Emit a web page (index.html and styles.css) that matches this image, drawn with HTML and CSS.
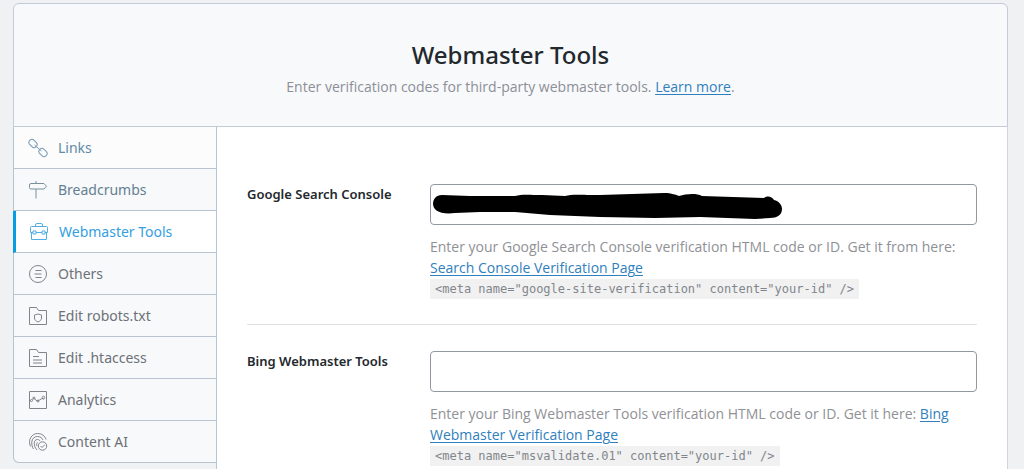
FILE: index.html
```html
<!DOCTYPE html>
<html lang="en">
<head>
<meta charset="utf-8">
<title>Webmaster Tools</title>
<link rel="stylesheet" href="styles.css">
</head>
<body>
<main class="settings">
  <header class="header">
    <h1 class="title">Webmaster Tools</h1>
    <p class="subtitle">Enter verification codes for third-party webmaster tools. <a class="link" href="#">Learn more</a>.</p>
  </header>
  <div class="body">
    <nav class="tabs">
      <a class="tab tab-links" href="#"><svg class="icon" viewBox="0 0 20 20"><rect x="0.5" y="2.500" width="9" height="6" rx="3" transform="rotate(45 5 5.500)"/><rect x="10.500" y="11.500" width="9" height="6" rx="3" transform="rotate(45 15 14.500)"/><path d="M6.500 7l7 6"/></svg>Links</a>
      <a class="tab tab-crumbs" href="#"><svg class="icon" viewBox="0 0 20 20"><path d="M8 1v2.500M8 9v9.500M3 3.500h13l2.500 2.700L16 9H3a1.500 1.500 0 0 1-1.500-1.500V5A1.500 1.500 0 0 1 3 3.500z"/></svg>Breadcrumbs</a>
      <a class="tab active" href="#" aria-current="page"><svg class="icon" viewBox="0 0 20 20"><path d="M6.500 4.500V3a1.500 1.500 0 0 1 1.500-1.500h4A1.500 1.500 0 0 1 13.500 3v1.500M2.500 4.500h15a1 1 0 0 1 1 1v5h-2.500M13 10.500H7M4 10.500H1.500v-5a1 1 0 0 1 1-1M2.500 10.500v7h15v-7M4 9h3v3H4zM13 9h3v3h-3z"/></svg>Webmaster Tools</a>
      <a class="tab" href="#"><svg class="icon" viewBox="0 0 20 20"><circle cx="10" cy="10" r="8.500"/><path d="M7.500 6.500h6M6.500 10h7M7.500 13.500h6"/></svg>Others</a>
      <a class="tab" href="#"><svg class="icon" viewBox="0 0 20 20"><path d="M1.500 18.500v-17h7l2 3h8v14zM10 8l3.500 1v3c0 2-1.500 3.200-3.500 4-2-.8-3.500-2-3.500-4V9z"/></svg>Edit robots.txt</a>
      <a class="tab" href="#"><svg class="icon" viewBox="0 0 20 20"><path d="M1.500 18.500v-17h7l2 3h8v14zM5 8.500h6M5 12h9M5 15h9"/></svg>Edit .htaccess</a>
      <a class="tab" href="#"><svg class="icon" viewBox="0 0 20 20"><path d="M1.500 1.500h17v17h-17zM1.500 11.500L3 10.500M4.500 9.500l1-1.500L9 11l2.500-1L14 8.500l2 .5"/><circle cx="3.500" cy="10.500" r="1"/><circle cx="6" cy="8" r="1"/><circle cx="10" cy="11" r="1"/><circle cx="15.500" cy="7.500" r="1.300"/></svg>Analytics</a>
      <a class="tab" href="#"><svg class="icon" viewBox="0 0 20 20"><circle cx="14.500" cy="14" r="4.200"/><path d="M12.500 14l1.500 1.500 2.800-2.800M2.500 14.500C-.5 7.500 4 1.500 9.500 1.500c4.500 0 7.500 2.500 8.500 6M5.500 17c-3-4.500-2.500-12.500 4-12.500 3 0 4.500 1.500 5.500 3.500M9 18c-3.500-3.500-4-10.500.5-10.500 1 0 2 .5 2.500 1.500M9 14c-.5-1.500-.5-3.500.5-3.500"/></svg>Content AI</a>
    </nav>
    <section class="content">
      <div class="row">
        <label class="label" for="google">Google Search Console</label>
        <div class="field">
          <div class="input-wrap">
            <input class="input" id="google" type="text">
            <svg class="redaction" viewBox="0 0 360 32" aria-hidden="true"><path d="M3 14C3 9 6 5 12 5L40 6L85 6C92 4 100 5 112 5L135 6C142 4 150 5 170 5L234 3C242 3 246 5 249 6C256 4 266 3 272 6L334 8C338 5 342 7 344 10C349 11 352 15 352 19C352 25 347 28 340 28L325 29L270 27L225 28L170 27L120 25L85 22L50 22L25 23C10 25 3 20 3 14Z"/></svg>
          </div>
          <p class="help">Enter your Google Search Console verification HTML code or ID. Get it from here: <a class="link" href="#">Search Console Verification Page</a></p>
          <code class="code">&lt;meta name="google-site-verification" content="your-id" /&gt;</code>
        </div>
      </div>
      <div class="row">
        <label class="label" for="bing">Bing Webmaster Tools</label>
        <div class="field">
          <div class="input-wrap"><input class="input" id="bing" type="text"></div>
          <p class="help">Enter your Bing Webmaster Tools verification HTML code or ID. Get it here: <a class="link" href="#">Bing Webmaster Verification Page</a></p>
          <code class="code">&lt;meta name="msvalidate.01" content="your-id" /&gt;</code>
        </div>
      </div>
    </section>
  </div>
</main>
</body>
</html>
```
FILE: styles.css
```css
* { box-sizing: border-box; }
body {
  margin: 0;
  background: #f0f1f3;
  color: #23282d;
  font-family: "Noto Sans", "Open Sans", sans-serif;
  font-size: 14px;
}
.settings {
  display: flex;
  flex-direction: column;
  min-height: 100vh;
  padding: 3px 16px 0 13px;
}
.header {
  padding: 34px 0 28px;
  border: 1px solid #c3cad8;
  border-radius: 6px 6px 0 0;
  background: #f8f9fb;
  text-align: center;
}
.title {
  margin: 0;
  font-size: 24px;
  font-weight: 500;
  line-height: 34px;
}
.subtitle {
  margin: 4px 0 0;
  color: #8c8f98;
  font-family: "Open Sans", "Noto Sans", sans-serif;
  font-size: 14px;
  line-height: 22px;
}
.link { color: #2f80bd; text-decoration: underline; text-underline-offset: 2px; }
.body { display: flex; flex: 1; }
.tabs { flex: 0 0 203px; }
.tab {
  display: flex;
  align-items: center;
  gap: 10px;
  height: 42px;
  padding-left: 14px;
  border-left: 1px solid #b5c2cf;
  border-bottom: 1px solid #b9c4d1;
  background: #f8f9fb;
  color: #6d7177;
  font-family: "Noto Sans", "Open Sans", sans-serif;
  font-size: 14px;
  text-decoration: none;
}
.tab:last-child { border-bottom-left-radius: 6px; }
.tab-links { background: #fcfcfc; color: #5f8ba6; }
.tab-crumbs { color: #64808f; }
.active {
  padding-left: 13px;
  border-left: 3px solid #069de3;
  background: #fff;
  color: #35a0df;
}
.icon {
  flex: none;
  width: 20px;
  height: 20px;
  fill: none;
  stroke: currentColor;
  stroke-width: 1;
  opacity: 0.85;
}
.content {
  flex: 1;
  min-width: 0;
  padding: 31px 30px 0;
  border-left: 1px solid #b9c4d1;
  border-right: 1px solid #cfd4df;
  background: #fff;
}
.row { display: flex; padding: 26px 0 25px; }
.row + .row { padding-bottom: 0; border-top: 1px solid #e0e1e3; }
.label {
  flex: 0 0 183px;
  font-size: 13px;
  font-weight: 600;
  line-height: 20px;
}
.field { flex: 1; min-width: 0; }
.input-wrap { position: relative; }
.input {
  display: block;
  width: 100%;
  height: 41px;
  padding: 0 12px;
  border: 1px solid #9298a0;
  border-radius: 4px;
  background: #fff;
  font: inherit;
}
.redaction { position: absolute; top: 6px; left: 0; width: 360px; height: 32px; }
.help {
  margin: 11px 0 0;
  color: #8f9196;
  font-family: "Open Sans", "Noto Sans", sans-serif;
  font-size: 14px;
  line-height: 21px;
}
.code {
  display: inline-block;
  padding: 0 5px;
  background: #f1f1f1;
  color: #82868c;
  font-family: "DejaVu Sans Mono", monospace;
  font-size: 12px;
  line-height: 20px;
}
```
